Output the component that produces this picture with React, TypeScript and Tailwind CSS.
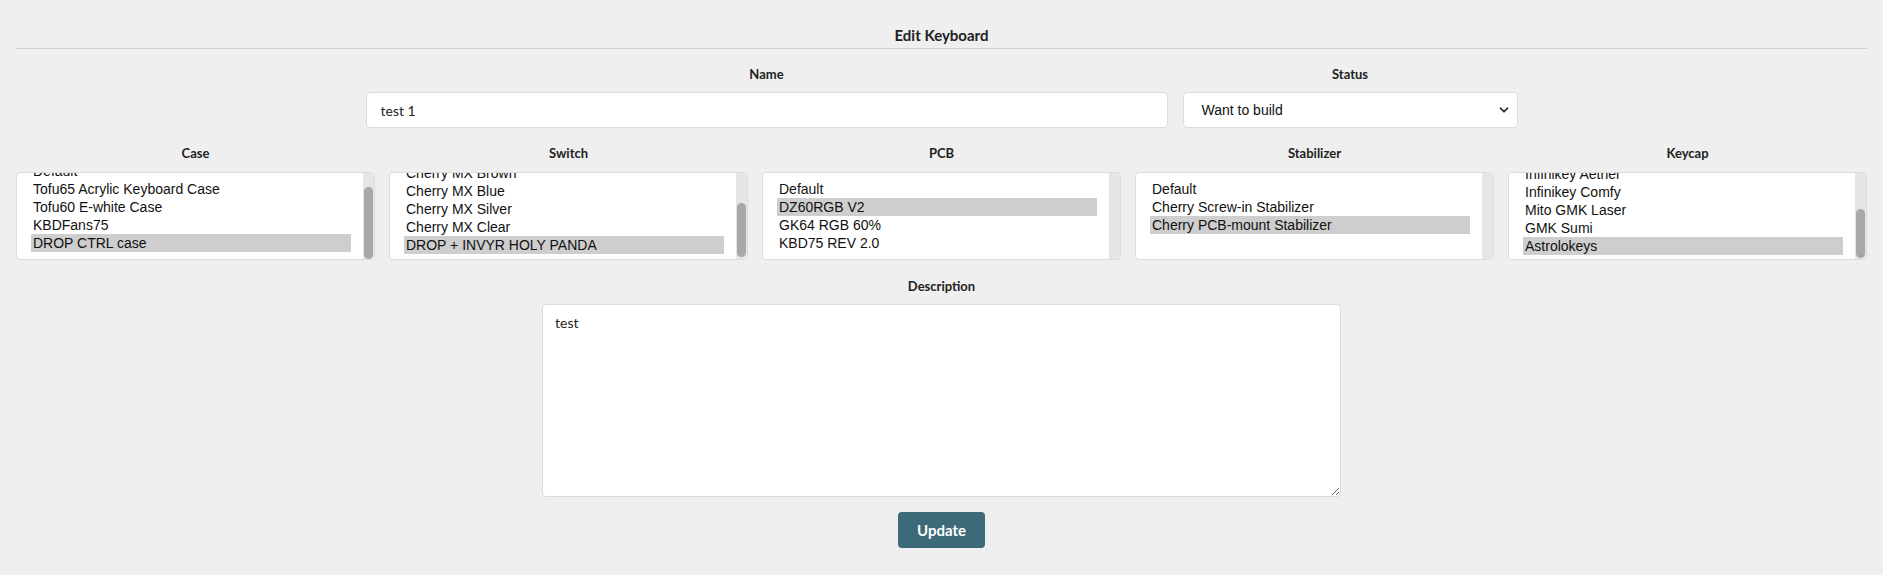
import { ChevronDown } from "lucide-react";

interface PartList {
  label: string;
  items: string[];
  selected: number;
  offsetClass: string;
  thumbClass: string | null;
}

const partLists: PartList[] = [
  {
    label: "Case",
    items: ["Default", "Tofu65 Acrylic Keyboard Case", "Tofu60 E-white Case", "KBDFans75", "DROP CTRL case"],
    selected: 4,
    offsetClass: "-mt-[18px]",
    thumbClass: "h-[72px] mb-0",
  },
  {
    label: "Switch",
    items: [
      "Default",
      "Cherry MX Red",
      "Cherry MX Brown",
      "Cherry MX Blue",
      "Cherry MX Silver",
      "Cherry MX Clear",
      "DROP + INVYR HOLY PANDA",
    ],
    selected: 6,
    offsetClass: "-mt-[52px]",
    thumbClass: "h-[54px] mb-[2px]",
  },
  {
    label: "PCB",
    items: ["Default", "DZ60RGB V2", "GK64 RGB 60%", "KBD75 REV 2.0"],
    selected: 1,
    offsetClass: "mt-0",
    thumbClass: null,
  },
  {
    label: "Stabilizer",
    items: ["Default", "Cherry Screw-in Stabilizer", "Cherry PCB-mount Stabilizer"],
    selected: 2,
    offsetClass: "mt-0",
    thumbClass: null,
  },
  {
    label: "Keycap",
    items: ["Default", "GMK Olivia", "Infinikey Aether", "Infinikey Comfy", "Mito GMK Laser", "GMK Sumi", "Astrolokeys"],
    selected: 6,
    offsetClass: "-mt-[51px]",
    thumbClass: "h-[49px] mb-[1px]",
  },
];

function PartSelect({ part }: { part: PartList }) {
  return (
    <div>
      <div className="text-center text-[13px] font-bold leading-[18px] text-[#222] mb-[10px]">{part.label}</div>
      {/* Multi-line list box, scroll position faked */}
      <div className="flex h-[88px] bg-white border border-[#dcdcdc] rounded-[4px] overflow-hidden">
        <div className="flex-1 overflow-hidden pl-[14px] pr-[12px]">
          <div className={`pt-[7px] ${part.offsetClass}`}>
            {part.items.map((item, idx) => (
              <div
                key={item}
                className={`h-[18px] leading-[18px] px-[2px] text-[14px] text-[#111] font-['Liberation_Sans',Arial,sans-serif] whitespace-nowrap ${
                  idx === part.selected ? "bg-[#cecece]" : ""
                }`}
              >
                {item}
              </div>
            ))}
          </div>
        </div>
        <div className="w-[11px] bg-[#e6e6e6] flex flex-col justify-end items-center">
          {part.thumbClass && <div className={`w-[9px] rounded-full bg-[#a8a8a8] ${part.thumbClass}`} />}
        </div>
      </div>
    </div>
  );
}

export default function App() {
  return (
    <div className="min-h-screen bg-[#efefef] font-['Lato',sans-serif] text-[#222]">
      <div className="px-4">
        {/* Title */}
        <h2 className="pt-[24px] text-center text-[15px] font-bold leading-[22px]">Edit Keyboard</h2>
        <div className="mt-[2px] h-px bg-[#cfcfcf]" />

        {/* Name + status */}
        <div className="mt-[16px] flex justify-center gap-[15px]">
          <div className="w-[802px]">
            <div className="text-center text-[13px] font-bold leading-[18px] mb-[9px]">Name</div>
            <input
              defaultValue="test 1"
              className="w-full h-[36px] px-[14px] bg-white border border-[#dcdcdc] rounded-[4px] text-[14px] text-[#222] outline-none"
            />
          </div>
          <div className="w-[335px]">
            <div className="text-center text-[13px] font-bold leading-[18px] mb-[9px]">Status</div>
            <div className="flex items-center justify-between h-[36px] pl-[18px] pr-[6px] bg-white border border-[#dcdcdc] rounded-[4px]">
              <span className="text-[14px] text-[#111] font-['Liberation_Sans',Arial,sans-serif]">Want to build</span>
              <ChevronDown size={14} strokeWidth={3} className="text-[#222]" />
            </div>
          </div>
        </div>

        {/* Parts */}
        <div className="mt-[16px] grid grid-cols-5 gap-[14px]">
          {partLists.map((part) => (
            <PartSelect key={part.label} part={part} />
          ))}
        </div>

        {/* Description */}
        <div className="mt-[17px] flex flex-col items-center">
          <div className="text-center text-[13px] font-bold leading-[18px] mb-[9px]">Description</div>
          <textarea
            defaultValue="test"
            className="w-[799px] h-[193px] px-[12px] py-[8px] bg-white border border-[#dcdcdc] rounded-[4px] text-[14px] leading-[20px] text-[#222] outline-none resize-y"
          />
          <button className="mt-[15px] w-[87px] h-[36px] bg-[#3d6a79] text-white text-[15px] font-bold rounded-[4px]">
            Update
          </button>
        </div>
      </div>
    </div>
  );
}
